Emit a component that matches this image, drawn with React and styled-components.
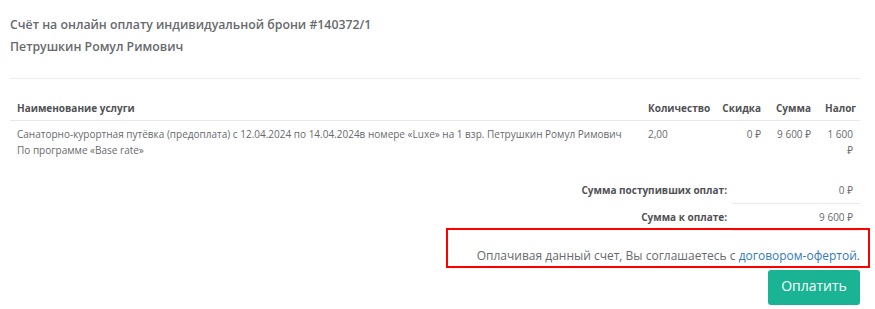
import styled, { createGlobalStyle } from "styled-components";

const GlobalStyle = createGlobalStyle`
    body {
        margin: 0;
        background: #ffffff;
        font-family: 'Open Sans', 'Noto Sans', sans-serif;
        color: #676a6c;
    }
`;

const items = [
    {
        name: "Санаторно-курортная путёвка (предоплата) с 12.04.2024 по 14.04.2024в номере «Luxe» на 1 взр. Петрушкин Ромул Римович",
        program: "По программе «Base rate»",
        qty: "2,00",
        discount: "0 ₽",
        sum: "9 600 ₽",
        tax: "1 600 ₽",
    },
];

const totals = [
    { label: "Сумма поступивших оплат:", value: "0 ₽" },
    { label: "Сумма к оплате:", value: "9 600 ₽" },
];

export default function App() {
    return (
        <>
            <GlobalStyle />
            <Page>
                <Header>
                    <h2>Счёт на онлайн оплату индивидуальной брони #140372/1</h2>
                    <h2>Петрушкин Ромул Римович</h2>
                </Header>
                <Divider />
                <Services>
                    <thead>
                        <tr>
                            <Th width="631">Наименование услуги</Th>
                            <Th width="74">Количество</Th>
                            <Th width="53" align="right">Скидка</Th>
                            <Th width="50" align="right">Сумма</Th>
                            <Th width="42" align="right">Налог</Th>
                        </tr>
                    </thead>
                    <tbody>
                        {items.map((item, index) => (
                            <tr key={index}>
                                <Td>{item.name}<br />{item.program}</Td>
                                <Td>{item.qty}</Td>
                                <Td align="right">{item.discount}</Td>
                                <Td align="right">{item.sum}</Td>
                                <Td align="right">{item.tax}</Td>
                            </tr>
                        ))}
                    </tbody>
                </Services>
                <Totals>
                    <tbody>
                        {totals.map((t) => (
                            <tr key={t.label}>
                                <TotalLabel>{t.label}</TotalLabel>
                                <TotalValue>{t.value}</TotalValue>
                            </tr>
                        ))}
                    </tbody>
                </Totals>
                <Offer>
                    Оплачивая данный счет, Вы соглашаетесь с <a href="#">договором-офертой</a>.
                </Offer>
                <Actions>
                    <PayButton>Оплатить</PayButton>
                </Actions>
            </Page>
        </>
    );
}

const Page = styled.div`
    padding: 14px 15px 0 10px;
`;

const Header = styled.div`
    h2 {
        margin: 0;
        font-size: 12.3px;
        font-weight: 600;
        line-height: 22px;
        color: #676a6c;
    }
`;

const Divider = styled.div`
    margin-top: 20px;
    border-top: 1px solid #ededed;
`;

const Services = styled.table`
    margin-top: 20px;
    width: 100%;
    border-collapse: collapse;
    table-layout: fixed;
    font-size: 10px;
`;

const Th = styled.th`
    box-sizing: border-box;
    width: ${(p) => p.width}px;
    text-align: ${(p) => p.align || "left"};
    padding: 3px 7px 5px;
    font-weight: 700;
    line-height: 13px;
    color: #505255;
    border-bottom: 1px solid #e7eaec;
    white-space: nowrap;
`;

const Td = styled.td`
    text-align: ${(p) => p.align || "left"};
    vertical-align: top;
    padding: 5px 7px 6px;
    line-height: 16px;
    color: #676a6c;
`;

const Totals = styled.table`
    margin-top: 13px;
    margin-left: auto;
    border-collapse: collapse;
    font-size: 10px;
`;

const TotalLabel = styled.td`
    text-align: right;
    font-weight: 700;
    color: #505255;
    padding: 6px 5px 6px 0;
    line-height: 14px;
`;

const TotalValue = styled.td`
    width: 114px;
    text-align: right;
    color: #676a6c;
    padding: 6px 7px 6px 7px;
    line-height: 14px;
    border-bottom: 1px solid #e7eaec;
`;

const Offer = styled.div`
    margin: -3px -10px 0 auto;
    width: 404px;
    border: 2px solid #ff0000;
    padding: 17px 8px 2px;
    text-align: right;
    font-size: 12px;
    line-height: 17px;
    white-space: nowrap;
    color: #676a6c;

    a {
        color: #337ab7;
        text-decoration: none;
    }
`;

const Actions = styled.div`
    display: flex;
    justify-content: flex-end;
    margin-top: 2px;
`;

const PayButton = styled.button`
    width: 92px;
    height: 35px;
    border: none;
    border-radius: 3px;
    background-color: #1ab394;
    color: #ffffff;
    font-family: 'Open Sans', sans-serif;
    font-size: 14px;
    line-height: 30px;
    padding: 0 0 4px;
    cursor: pointer;
`;
